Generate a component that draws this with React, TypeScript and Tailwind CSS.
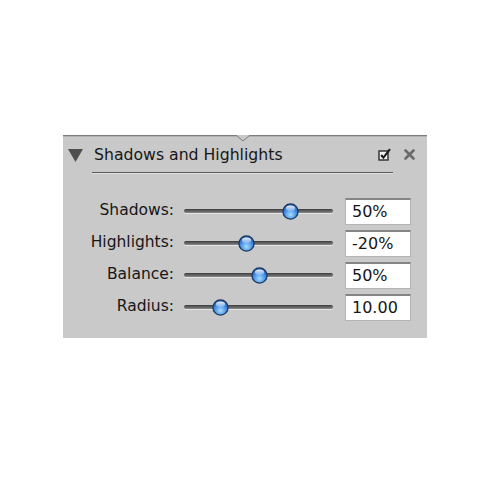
import React from "react";

type Row = { label: string; pos: number; value: string };

const rows: Row[] = [
  { label: "Shadows:", pos: 106, value: "50%" },
  { label: "Highlights:", pos: 62, value: "-20%" },
  { label: "Balance:", pos: 75, value: "50%" },
  { label: "Radius:", pos: 36, value: "10.00" },
];

function Thumb() {
  return (
    <svg width="17" height="17" viewBox="0 0 17 17">
      <defs>
        <radialGradient id="tb" cx="50%" cy="70%" r="60%">
          <stop offset="0%" stopColor="#a8dcff" />
          <stop offset="60%" stopColor="#4a94e6" />
          <stop offset="100%" stopColor="#1f5fb8" />
        </radialGradient>
        <linearGradient id="th" x1="0" y1="0" x2="0" y2="1">
          <stop offset="0%" stopColor="#ffffff" stopOpacity="0.95" />
          <stop offset="100%" stopColor="#ffffff" stopOpacity="0.2" />
        </linearGradient>
      </defs>
      <circle cx="8.5" cy="8.5" r="7.6" fill="url(#tb)" stroke="#16345f" strokeWidth="1.2" />
      <ellipse cx="8.5" cy="5.2" rx="4.6" ry="2.8" fill="url(#th)" />
    </svg>
  );
}

function Slider({ pos }: { pos: number }) {
  return (
    <div className="relative h-[17px] w-[149px]">
      <div className="absolute left-0 right-0 top-[6px] h-[4px] rounded-full bg-gradient-to-b from-[#3c3c3c] to-[#8a8a8a] shadow-[0_1px_0_#e6e6e6]" />
      <div className="absolute top-0" style={{ left: pos - 8 }}>
        <Thumb />
      </div>
    </div>
  );
}

export default function App() {
  return (
    <div className="h-[500px] w-[500px] bg-white pl-[63px] pt-[135px] font-['DejaVu_Sans',sans-serif] text-[#161616]">
      <div className="relative h-[203px] w-[364px] bg-[#c9c9c9]">
        {/* top rule with the small notch */}
        <div className="h-[2px] border-t border-[#7c7c7c] bg-[#b2b2b2]" />
        <svg className="absolute left-[173px] top-0" width="14" height="7" viewBox="0 0 14 7">
          <path d="M0 0 L7 6 L14 0" fill="#c9c9c9" stroke="#7c7c7c" strokeWidth="1" />
        </svg>

        {/* header */}
        <div className="flex h-[35px] items-center pl-[5px] pr-[12px]">
          <svg width="15" height="14" viewBox="0 0 15 14">
            <path d="M0 1 L15 1 L7.5 14 Z" fill="#4e4e4e" />
          </svg>
          <span className="ml-[11px] mt-[1px] text-[15.7px] leading-none">Shadows and Highlights</span>
          <div className="ml-auto flex items-center gap-[13px]">
            <svg width="13" height="13" viewBox="0 0 13 13">
              <rect x="1" y="3" width="9" height="9" fill="#f2f2f2" stroke="#2a2a2a" strokeWidth="1.4" />
              <path d="M3.2 7 L5.4 9.6 L12 1.2" fill="none" stroke="#1a1a1a" strokeWidth="2" />
            </svg>
            <svg width="11" height="11" viewBox="0 0 11 11">
              <path d="M1.5 1.5 L9.5 9.5 M9.5 1.5 L1.5 9.5" stroke="#6a6a6a" strokeWidth="2.6" strokeLinecap="round" />
            </svg>
          </div>
        </div>
        <div className="ml-[29px] h-px w-[301px] bg-[#5a5a5a] shadow-[0_1px_0_#e0e0e0]" />

        {/* adjustment rows */}
        <div className="mt-[22px] flex flex-col">
          {rows.map((r) => (
            <div key={r.label} className="flex h-[32px] items-center">
              <div className="w-[111px] text-right text-[15.5px]">{r.label}</div>
              <div className="ml-[10px]">
                <Slider pos={r.pos} />
              </div>
              <div className="ml-[12px] flex h-[27px] w-[66px] items-center border border-[#b4b4b4] border-t-[2px] border-t-[#858585] bg-white pl-[6px] text-[16px]">
                {r.value}
              </div>
            </div>
          ))}
        </div>
      </div>
    </div>
  );
}
